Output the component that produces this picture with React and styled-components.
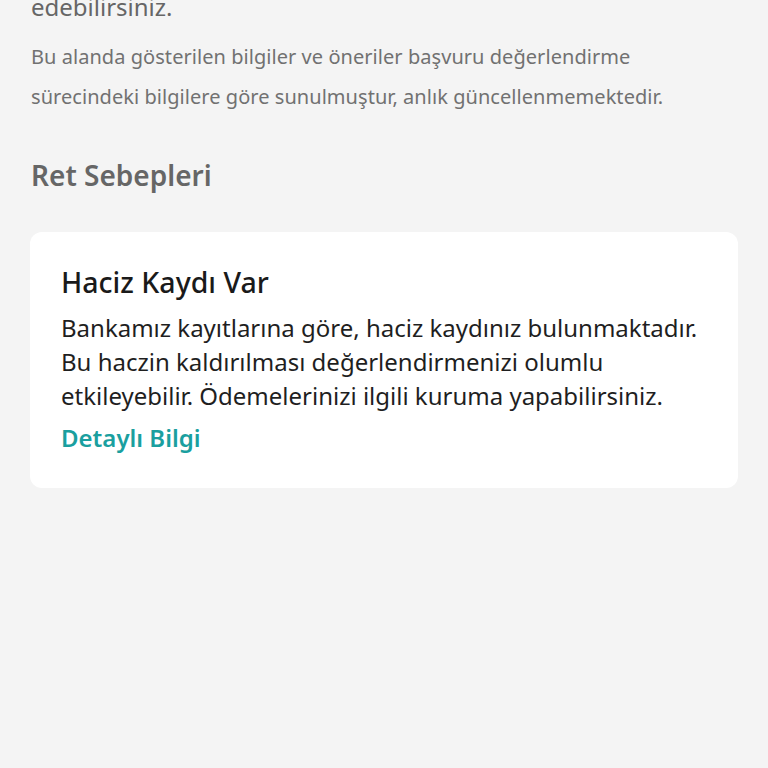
import React from "react";
import styled, { createGlobalStyle } from "styled-components";

const Global = createGlobalStyle`
  html, body { margin: 0; padding: 0; background: #f4f4f4; }
  body { font-family: "Noto Sans", "Open Sans", sans-serif; -webkit-font-smoothing: antialiased; }
`;

const Page = styled.div`
  min-height: 768px;
  background: #f4f4f4;
  padding: 0 30px;
  margin-top: -10px;
  box-sizing: border-box;
  display: flex;
  flex-direction: column;
`;

const LeadText = styled.p`
  margin: 0;
  font-size: 24px;
  line-height: 34px;
  color: #666666;
  padding-left: 1px;
`;

const Note = styled.p`
  margin: 13px 0 0;
  font-size: 20px;
  line-height: 40px;
  color: #717171;
  padding-left: 1px;
  letter-spacing: 0.05px;
`;

const SectionTitle = styled.h2`
  margin: 40px 0 0;
  font-size: 28px;
  line-height: 36px;
  font-weight: 600;
  color: #666666;
  padding-left: 1px;
`;

const Card = styled.section`
  margin-top: 39px;
  background: #ffffff;
  border-radius: 12px;
  padding: 32px 31px 33px;
  display: flex;
  flex-direction: column;
`;

const CardTitle = styled.h3`
  margin: 0;
  font-size: 28.5px;
  line-height: 36px;
  font-weight: 500;
  color: #1a1a1a;
`;

const CardBody = styled.p`
  margin: 11px 0 0;
  font-size: 24px;
  line-height: 34px;
  color: #1f1f1f;
`;

const Link = styled.a`
  margin-top: 8px;
  font-size: 24px;
  line-height: 34px;
  font-weight: 600;
  color: #1a9f9f;
  text-decoration: none;
`;

export default function App() {
  return (
    <>
      <Global />
      <Page>
        <LeadText>edebilirsiniz.</LeadText>
        <Note>
          Bu alanda gösterilen bilgiler ve öneriler başvuru değerlendirme
          <br />
          sürecindeki bilgilere göre sunulmuştur, anlık güncellenmemektedir.
        </Note>
        <SectionTitle>Ret Sebepleri</SectionTitle>
        <Card>
          <CardTitle>Haciz Kaydı Var</CardTitle>
          <CardBody>
            Bankamız kayıtlarına göre, haciz kaydınız bulunmaktadır.
            <br />
            Bu haczin kaldırılması değerlendirmenizi olumlu
            <br />
            etkileyebilir. Ödemelerinizi ilgili kuruma yapabilirsiniz.
          </CardBody>
          <Link href="#">Detaylı Bilgi</Link>
        </Card>
      </Page>
    </>
  );
}
